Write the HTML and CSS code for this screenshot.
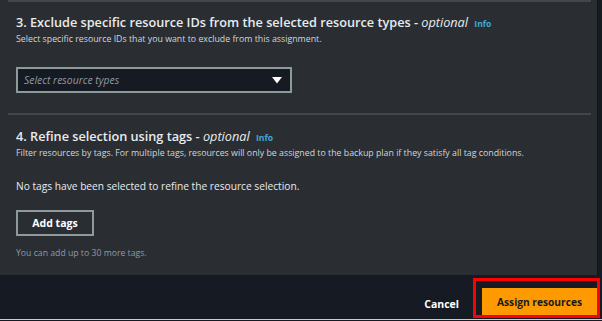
FILE: index.html
```html
<!DOCTYPE html>
<html lang="en">
<head>
    <meta charset="UTF-8">
    <title>Assign resources</title>
    <link rel="stylesheet" href="styles.css">
</head>
<body>
    <div class="panel">
        <div class="divider divider-top"></div>

        <section class="section section-ids">
            <h2 class="section-title">3. Exclude specific resource IDs from the selected resource types - <em>optional</em> <a class="info" href="#">Info</a></h2>
            <p class="section-desc">Select specific resource IDs that you want to exclude from this assignment.</p>
            <div class="select">
                <span class="select-placeholder">Select resource types</span>
                <svg class="select-caret" width="10" height="7" viewBox="0 0 10 7"><path d="M0 0 H10 L5 6.5 Z" fill="#ffffff"/></svg>
            </div>
        </section>

        <div class="divider"></div>

        <section class="section section-tags">
            <h2 class="section-title">4. Refine selection using tags - <em>optional</em> <a class="info" href="#">Info</a></h2>
            <p class="section-desc">Filter resources by tags. For multiple tags, resources will only be assigned to the backup plan if they satisfy all tag conditions.</p>
            <p class="empty-text">No tags have been selected to refine the resource selection.</p>
            <button class="btn-normal">Add tags</button>
            <p class="hint">You can add up to 30 more tags.</p>
        </section>
    </div>

    <div class="footer">
        <button class="btn-link">Cancel</button>
        <div class="highlight">
            <button class="btn-primary">Assign resources</button>
        </div>
    </div>
</body>
</html>
```

FILE: styles.css
```css
:root {
    --panel-bg: #2a2e33;
    --page-bg: #161a22;
    --divider: #414750;
    --text: #e9ebed;
    --muted: #8d99a8;
    --info: #3fa8d6;
}

body {
    margin: 0;
    background: var(--page-bg);
    font-family: 'Open Sans', 'Noto Sans', sans-serif;
    color: var(--text);
    overflow: hidden;
}

.panel {
    background: var(--panel-bg);
    width: 598px;
    height: 275px;
    border-right: 1px solid #10131a;
    box-sizing: border-box;
    padding: 0 6px 0 8px;
}

.divider {
    height: 2px;
    background: var(--divider);
}

.section {
    padding: 0 0 0 8px;
}

.section-ids {
    padding-top: 11px;
    height: 111px;
    box-sizing: border-box;
}

.section-tags {
    padding-top: 12px;
}

.section-title {
    margin: 0;
    font-size: 12.7px;
    font-weight: 600;
    line-height: 18px;
}

.section-title em {
    font-weight: 400;
}

.info {
    color: var(--info);
    font-size: 8.6px;
    font-weight: 700;
    text-decoration: none;
    margin-left: 3px;
}

.section-desc {
    margin: 0;
    font-size: 8.8px;
    line-height: 12px;
    color: #d1d5db;
}

.select {
    margin-top: 22px;
    width: 276px;
    height: 26px;
    box-sizing: border-box;
    border: 2px solid #8c9a99;
    background: var(--page-bg);
    display: flex;
    align-items: center;
    justify-content: space-between;
    padding: 0 8px 0 6px;
}

.select-placeholder {
    font-style: italic;
    font-size: 10.4px;
    color: var(--muted);
}

.empty-text {
    margin: 20px 0 0;
    font-size: 10.2px;
    line-height: 14px;
}

.btn-normal {
    margin-top: 17px;
    width: 78px;
    height: 26px;
    background: transparent;
    border: 2px solid #8c9a99;
    color: #ffffff;
    font-family: inherit;
    font-size: 10.5px;
    font-weight: 700;
    padding: 0;
}

.hint {
    margin: 11px 0 0;
    font-size: 8.7px;
    color: var(--muted);
}

.footer {
    height: 44px;
    border-bottom: 1px solid #c8cdd2;
    display: flex;
    justify-content: flex-end;
    align-items: flex-end;
    padding-right: 2px;
}

.btn-link {
    background: none;
    border: none;
    color: #ffffff;
    font-family: inherit;
    font-size: 10.5px;
    font-weight: 700;
    padding: 0;
    margin: 0 14px 8px 0;
}

.highlight {
    border: 3px solid #ff0000;
    padding: 7px 0 0 6px;
    margin-bottom: 1px;
}

.btn-primary {
    background: #ff9900;
    border: none;
    color: #16191f;
    font-family: inherit;
    font-size: 10.2px;
    font-weight: 700;
    width: 115px;
    height: 27px;
    padding: 0;
    display: block;
}
```
